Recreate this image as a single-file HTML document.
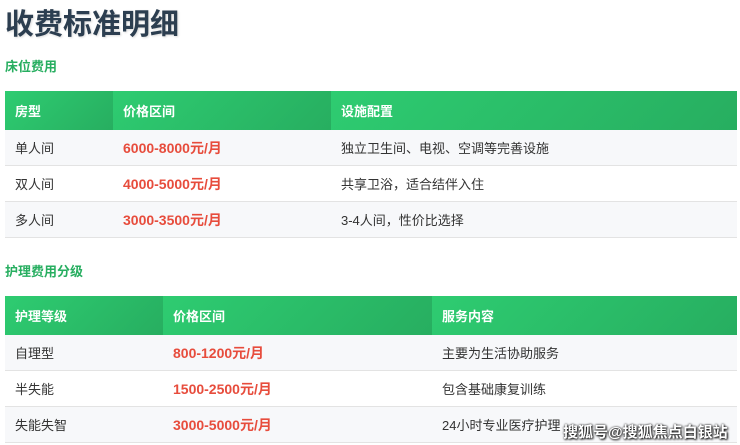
<!DOCTYPE html>
<html><head><meta charset="utf-8"><style>
body{margin:0;width:740px;height:445px;overflow:hidden;background:#fff;font-family:"Liberation Sans","Noto Sans CJK SC",sans-serif;position:relative}
h1{position:absolute;left:5px;top:1px;margin:0;font-size:29px;font-weight:bold;color:#2c3e50;text-shadow:1px 1px 2px rgba(0,0,0,.15)}
.sec{position:absolute;left:5px;font-size:13px;font-weight:bold;color:#27ae60}
table{position:absolute;left:5px;width:732px;border-collapse:collapse;font-size:13px;color:#333}
th{height:39px;text-align:left;padding:0 0 0 10px;color:#fff;font-weight:bold;background:linear-gradient(135deg,#2ecc71,#27ae60)}
td{height:35px;padding:0 0 0 10px;border-bottom:1px solid #e3e3e3}
tr:nth-child(even) td{background:#f7f8fa}
.p{color:#e74c3c;font-weight:bold;font-size:14px}
.wm{position:absolute;left:563px;top:421px;font-size:15px;font-weight:bold;color:#fff;text-shadow:0 0 2px #000,1px 1px 2px #000}
</style></head><body>
<h1>收费标准明细</h1>
<div class="sec" style="top:56px">床位费用</div>
<table style="top:91px">
<tr><th style="width:98px">房型</th><th style="width:208px">价格区间</th><th>设施配置</th></tr>
<tr><td>单人间</td><td class="p">6000-8000元/月</td><td>独立卫生间、电视、空调等完善设施</td></tr>
<tr><td>双人间</td><td class="p">4000-5000元/月</td><td>共享卫浴，适合结伴入住</td></tr>
<tr><td>多人间</td><td class="p">3000-3500元/月</td><td>3-4人间，性价比选择</td></tr>
</table>
<div class="sec" style="top:261px">护理费用分级</div>
<table style="top:296px">
<tr><th style="width:148px">护理等级</th><th style="width:259px">价格区间</th><th>服务内容</th></tr>
<tr><td>自理型</td><td class="p">800-1200元/月</td><td>主要为生活协助服务</td></tr>
<tr><td>半失能</td><td class="p">1500-2500元/月</td><td>包含基础康复训练</td></tr>
<tr><td>失能失智</td><td class="p">3000-5000元/月</td><td>24小时专业医疗护理</td></tr>
</table>
<div class="wm">搜狐号@搜狐焦点白银站</div>
</body></html>
